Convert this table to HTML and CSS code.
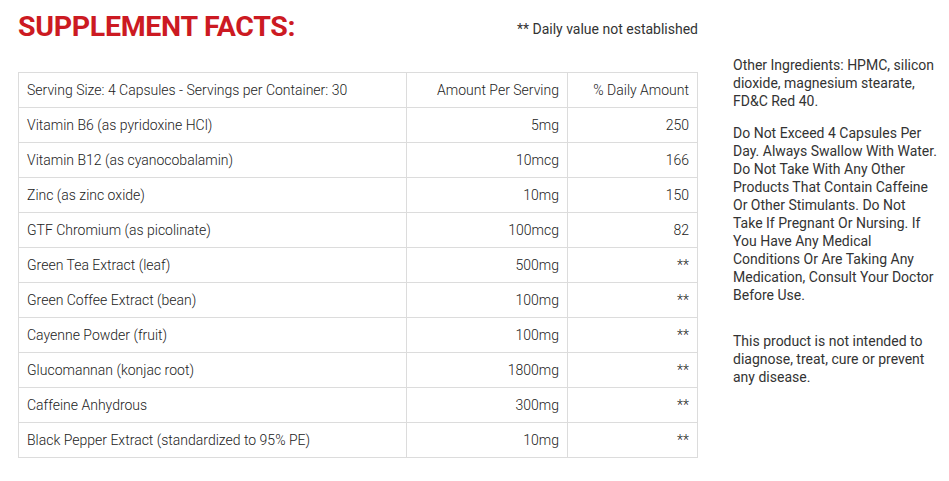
FILE: index.html
```html
<!DOCTYPE html>
<html>
<head>
<meta charset="utf-8">
<link rel="stylesheet" href="styles.css">
</head>
<body>
<div class="page">
  <div class="main">
    <div class="head">
      <h1 class="title">SUPPLEMENT FACTS:</h1>
      <div class="note">** Daily value not established</div>
    </div>
    <table class="facts">
      <tr><td>Serving Size: 4 Capsules - Servings per Container: 30</td><td class="r">Amount Per Serving</td><td class="r">% Daily Amount</td></tr>
      <tr><td>Vitamin B6 (as pyridoxine HCl)</td><td class="r">5mg</td><td class="r">250</td></tr>
      <tr><td>Vitamin B12 (as cyanocobalamin)</td><td class="r">10mcg</td><td class="r">166</td></tr>
      <tr><td>Zinc (as zinc oxide)</td><td class="r">10mg</td><td class="r">150</td></tr>
      <tr><td>GTF Chromium (as picolinate)</td><td class="r">100mcg</td><td class="r">82</td></tr>
      <tr><td>Green Tea Extract (leaf)</td><td class="r">500mg</td><td class="r">**</td></tr>
      <tr><td>Green Coffee Extract (bean)</td><td class="r">100mg</td><td class="r">**</td></tr>
      <tr><td>Cayenne Powder (fruit)</td><td class="r">100mg</td><td class="r">**</td></tr>
      <tr><td>Glucomannan (konjac root)</td><td class="r">1800mg</td><td class="r">**</td></tr>
      <tr><td>Caffeine Anhydrous</td><td class="r">300mg</td><td class="r">**</td></tr>
      <tr><td>Black Pepper Extract (standardized to 95% PE)</td><td class="r">10mg</td><td class="r">**</td></tr>
    </table>
  </div>
  <div class="side">
    <p>Other Ingredients: HPMC, silicon dioxide, magnesium stearate, FD&amp;C Red 40.</p>
    <p>Do Not Exceed 4 Capsules Per Day. Always Swallow With Water. Do Not Take With Any Other Products That Contain Caffeine Or Other Stimulants. Do Not Take If Pregnant Or Nursing. If You Have Any Medical Conditions Or Are Taking Any Medication, Consult Your Doctor Before Use.</p>
    <p class="gap">This product is not intended to diagnose, treat, cure or prevent any disease.</p>
  </div>
</div>
</body>
</html>
```
FILE: styles.css
```css
html, body {
  margin: 0;
  padding: 0;
  background: #fff;
}
body {
  font-family: Roboto, "Liberation Sans", sans-serif;
  color: #333;
}
.page {
  display: flex;
  padding: 0 0 0 18px;
}
.main {
  width: 680px;
}
.head {
  display: flex;
  justify-content: space-between;
  align-items: flex-start;
  height: 72px;
}
.title {
  margin: 9px 0 0 0;
  font-size: 28.5px;
  font-weight: 700;
  color: #cc1a22;
  letter-spacing: -0.3px;
  line-height: 36px;
}
.note {
  margin-top: 20px;
  font-size: 14px;
  line-height: 18px;
  color: #333;
}
.facts {
  width: 680px;
  border-collapse: collapse;
  font-size: 14px;
  font-weight: 300;
  color: #222;
}
.facts td {
  border: 1px solid #dcdcdc;
  height: 34px;
  padding: 0 8px;
  line-height: 18px;
}
.facts td:nth-child(1) { width: 371px; }
.facts td:nth-child(2) { width: 144px; }
.facts td.r { text-align: right; }
.side {
  margin-left: 35px;
  width: 204px;
  padding-top: 56px;
  font-size: 14px;
  line-height: 18px;
  color: #333;
}
.side p {
  margin: 0 0 14px 0;
}
.side p.gap {
  margin-top: 28px;
}
```
